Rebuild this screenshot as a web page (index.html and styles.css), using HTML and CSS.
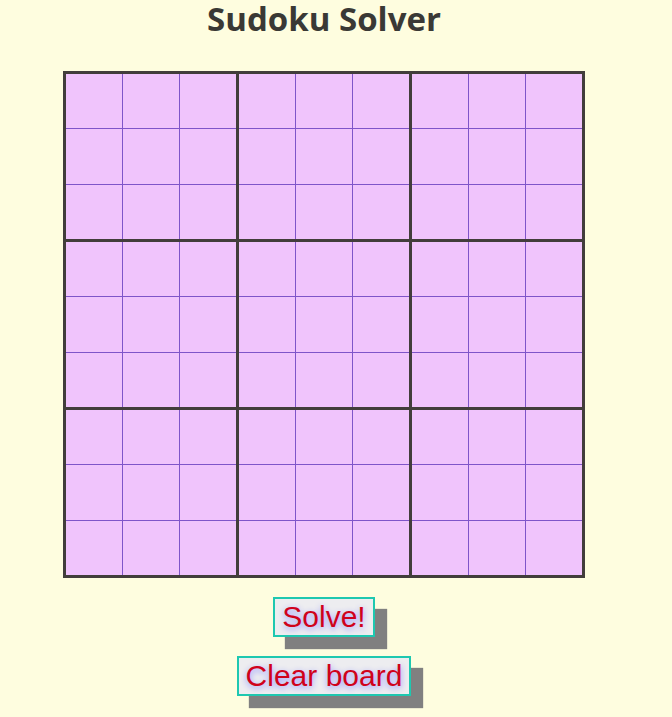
FILE: index.html
```html
<!DOCTYPE html>
<html>
<head>
<meta charset="utf-8">
<title>Sudoku Solver</title>
<link rel="stylesheet" href="styles.css">
</head>
<body>
<div class="page">
  <h1 class="title">Sudoku Solver</h1>
  <div class="board" id="board"></div>
  <button class="btn">Solve!</button>
  <button class="btn">Clear board</button>
</div>
<script>
  var board = document.getElementById('board');
  for (var b = 0; b < 9; b++) {
    var box = document.createElement('div');
    box.className = 'box';
    for (var c = 0; c < 9; c++) {
      var cell = document.createElement('div');
      cell.className = 'cell';
      box.appendChild(cell);
    }
    board.appendChild(box);
  }
</script>
</body>
</html>
```
FILE: styles.css
```css
html, body {
  margin: 0;
  padding: 0;
  background: #fefddf;
}
.page {
  width: 648px;
  padding-bottom: 30px;
  display: flex;
  flex-direction: column;
  align-items: center;
}
.title {
  margin: 0;
  font-family: "Open Sans", sans-serif;
  font-weight: 700;
  font-size: 33px;
  line-height: 38px;
  color: #3a3935;
}
.board {
  margin-top: 33px;
  display: grid;
  grid-template-columns: repeat(3, 170px);
  grid-template-rows: repeat(3, 165px);
  gap: 3px;
  border: 3px solid #423d3b;
  background: #423d3b;
}
.box {
  display: grid;
  grid-template-columns: repeat(3, 56px);
  grid-template-rows: repeat(3, 1fr);
  gap: 1px;
  background: #7f55c9;
}
.cell {
  background: #f0c4fc;
}
.btn {
  margin-top: 19px;
  font-family: "Liberation Sans", Arial, sans-serif;
  font-size: 30px;
  line-height: 34px;
  padding: 1px 7px;
  color: #d0021b;
  background: #ededf0;
  border: 2px solid #1ec8b0;
  box-shadow: 12px 12px 1px #808080;
  text-shadow: 0 2px 6px #8a8cff;
  cursor: pointer;
}
```
